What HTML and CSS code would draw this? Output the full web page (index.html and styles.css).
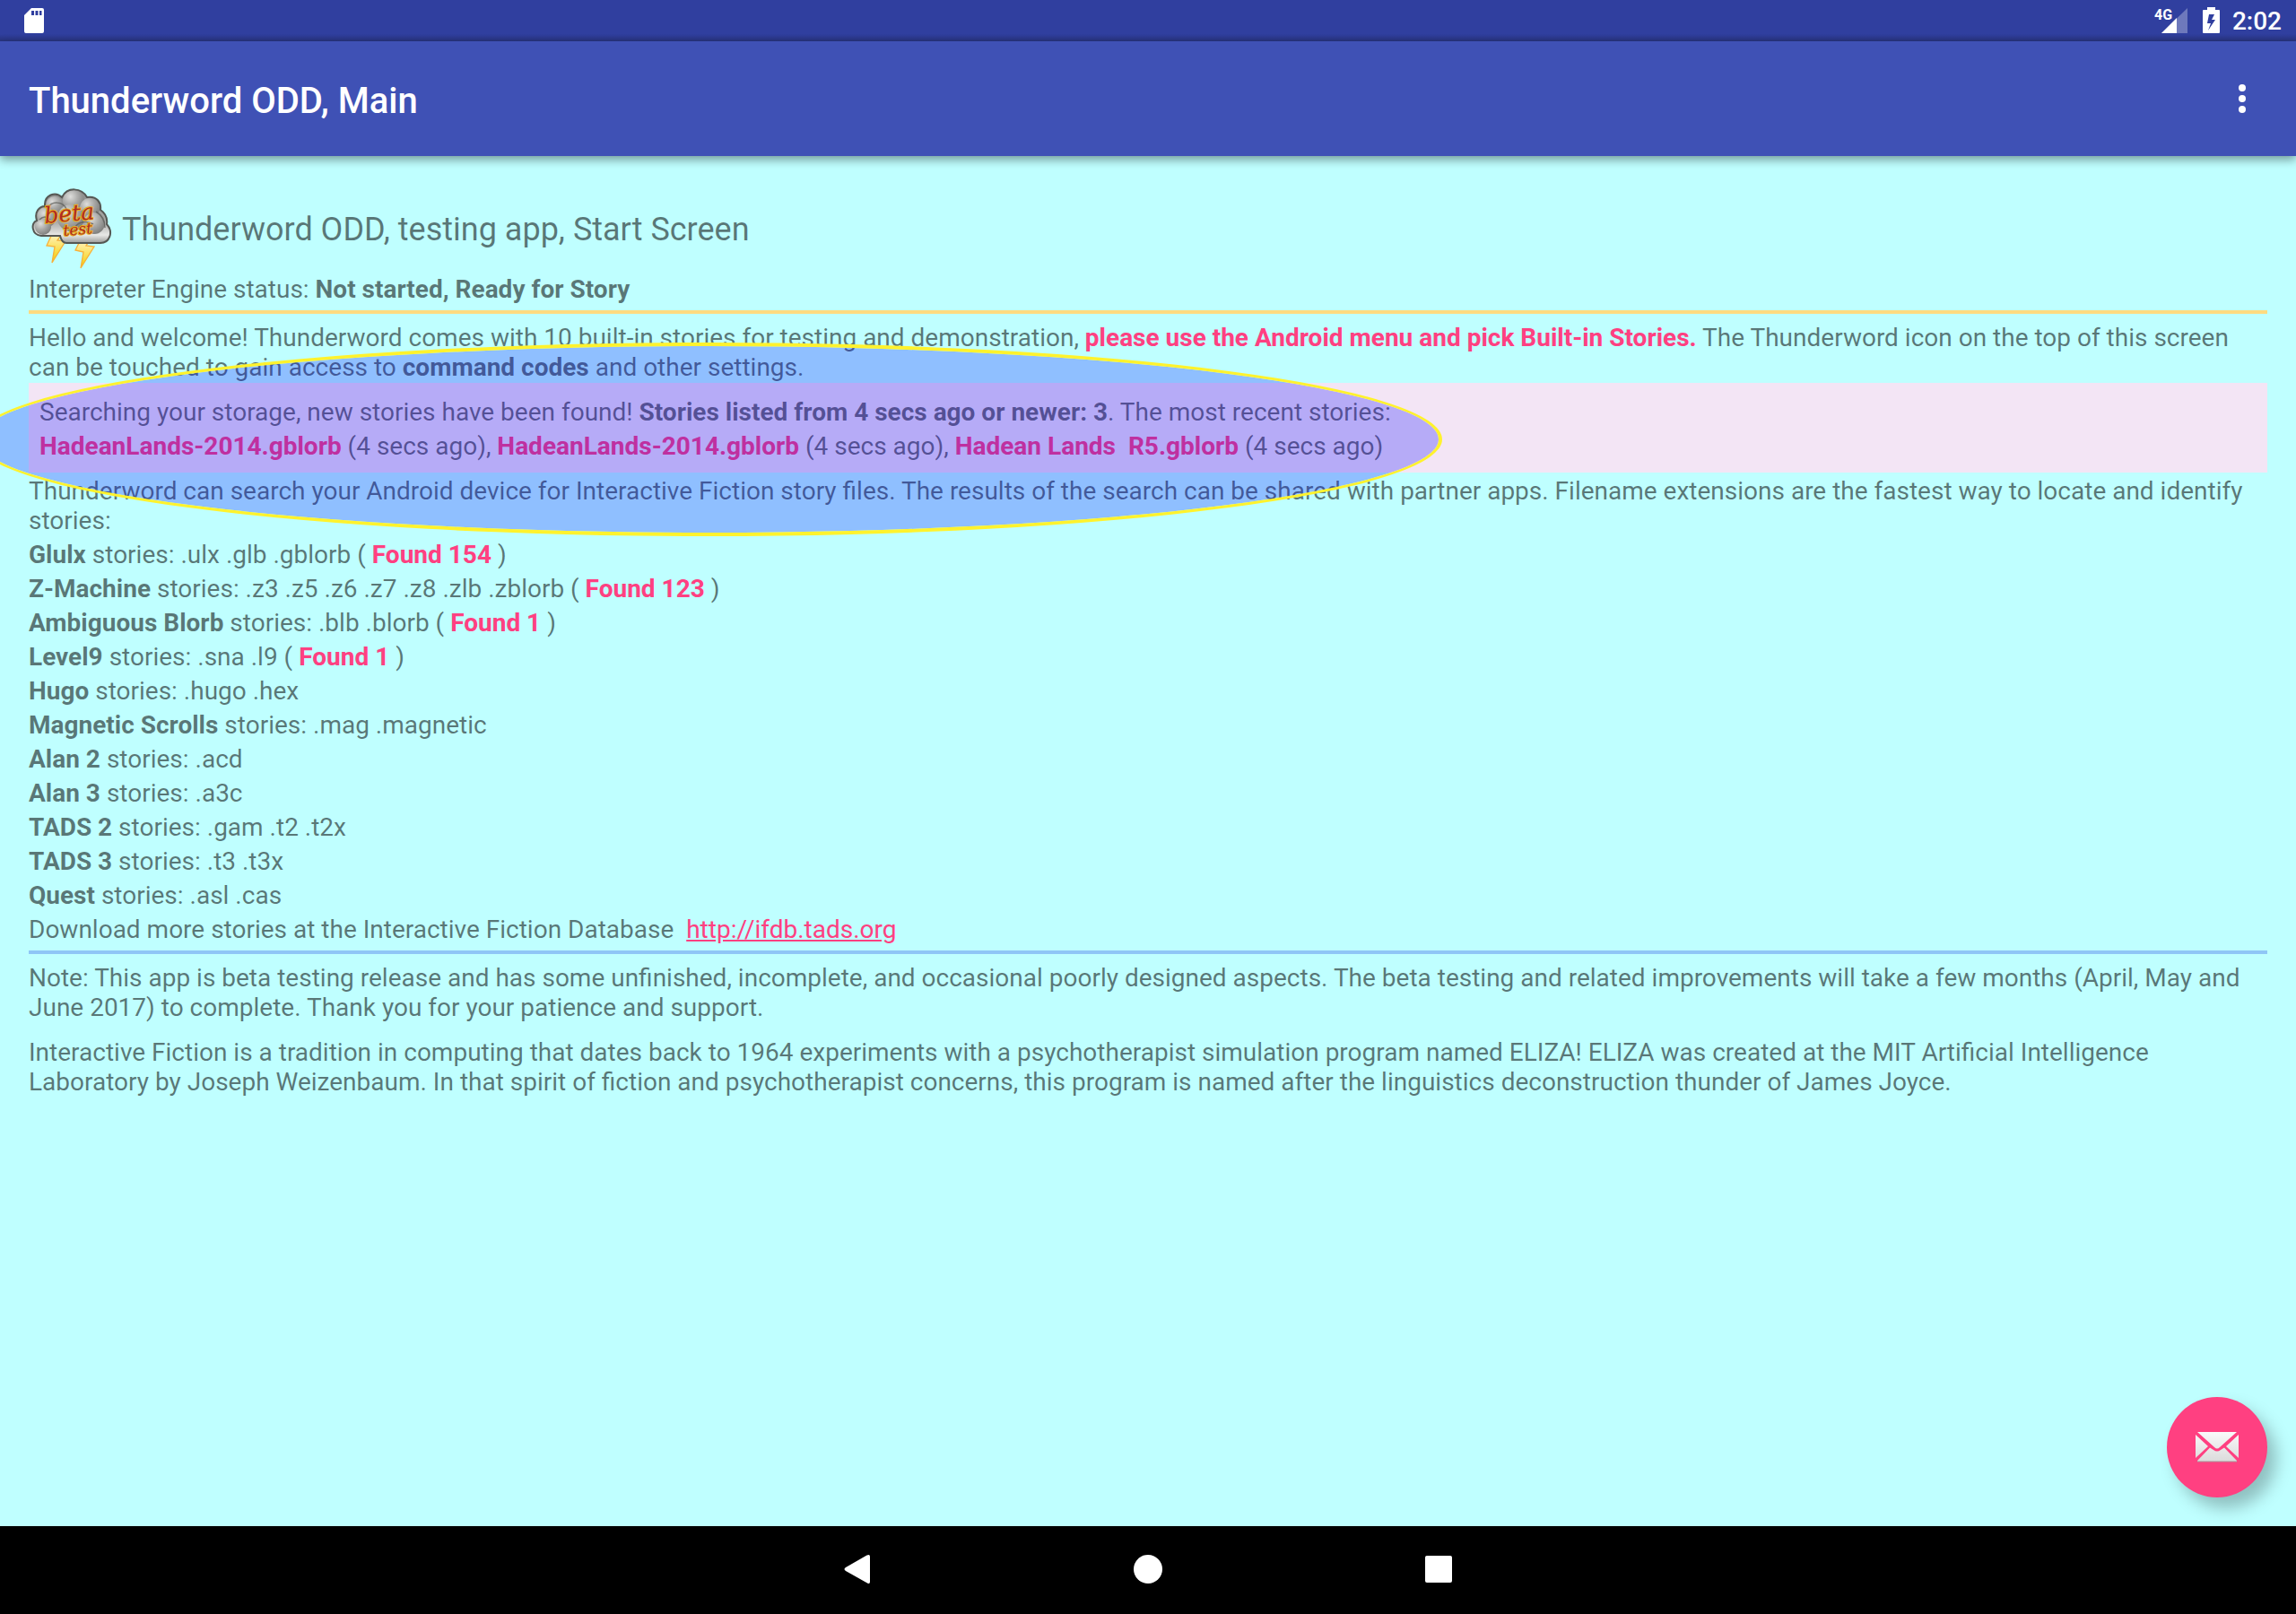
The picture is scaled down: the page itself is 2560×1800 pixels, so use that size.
FILE: index.html
```html
<!DOCTYPE html>
<html lang="en">
<head>
<meta charset="utf-8">
<title>Thunderword ODD, Main</title>
<link rel="stylesheet" href="styles.css">
</head>
<body>
<div class="status-bar">
  <svg class="sd" width="24" height="28" viewBox="0 0 24 28"><path fill="#fff" fill-rule="evenodd" d="M9 0h12a2 2 0 0 1 2 2v24a2 2 0 0 1-2 2H3a2 2 0 0 1-2-2V8zM9 3v5h3V3zm4.500 0v5h3V3zM18 3v5h2.500V3z"/></svg>
  <div class="status-icons">
    <svg class="signal" width="38" height="30" viewBox="0 0 38 30"><path d="M8 29 37 1v28z" fill="#fff" opacity=".3"/><path d="M8 29 25 12v17z" fill="#fff"/><text x="0" y="14" class="net">4G</text></svg>
    <svg width="20" height="30" viewBox="0 0 20 30"><path fill="#fff" fill-rule="evenodd" d="M5 0h9v3h4a1 1 0 0 1 1 1v24a1 1 0 0 1-1 1H1a1 1 0 0 1-1-1V4a1 1 0 0 1 1-1h4zM7 8 5 18h4L6 26l8-12H10l3-6z"/></svg>
    <span class="clock">2:02</span>
  </div>
</div>
<header class="app-bar">
  <h1>Thunderword ODD, Main</h1>
  <button class="overflow" aria-label="More options"><svg width="8" height="32" viewBox="0 0 8 32"><g fill="#fff"><circle cx="4" cy="4" r="4"/><circle cx="4" cy="16" r="4"/><circle cx="4" cy="28" r="4"/></g></svg></button>
</header>
<main>
  <div class="intro">
    <button class="logo" aria-label="Thunderword settings">
      <svg width="96" height="96" viewBox="0 0 96 96">
        <defs>
          <radialGradient id="puff" cx=".35" cy=".3" r=".8"><stop offset="0" stop-color="#dededc"/><stop offset=".5" stop-color="#a6a6a4"/><stop offset="1" stop-color="#777775"/></radialGradient>
          <linearGradient id="base" x1="0" y1="0" x2="0" y2="1"><stop offset="0" stop-color="#8b8b89"/><stop offset=".6" stop-color="#a8a8a6"/><stop offset=".85" stop-color="#e8e8e6"/><stop offset="1" stop-color="#999997"/></linearGradient>
          <linearGradient id="bolt" x1="0" y1="0" x2="0" y2="1"><stop offset="0" stop-color="#fff3c0"/><stop offset=".5" stop-color="#fbe05a"/><stop offset="1" stop-color="#f0cc00"/></linearGradient>
        </defs>
        <g fill="url(#bolt)" stroke="#f8b038" stroke-width="1.300"><path d="M26 55 20 68l9 1-3 18 15-24-9-1 5-7z"/><path d="M57 63 52 73l9 2-3 18 15-24-9-1 4-6z"/></g>
        <path d="M14 57C3 56 2 42 9 40 6 30 12 24 18 24 17 11 30 7 37 14 43 2 59 3 65 14 76 12 81 20 80 28 87 33 88 38 87 44 95 53 90 65 80 65H42q-5 0-7-8z" fill="url(#base)"/>
        <g fill="url(#puff)"><circle cx="29" cy="23" r="10"/><circle cx="50" cy="18" r="12"/><circle cx="68" cy="26" r="11"/><circle cx="47" cy="37" r="15"/><circle cx="20" cy="36" r="11"/><circle cx="73" cy="43" r="12"/><circle cx="16" cy="47" r="9"/></g>
        <path d="M22 26c3-8 16-8 20 1m10 20c4-6 13-7 20-3M12 39q6-6 12 0M75 30q10 6 10 18" fill="none" stroke="#555753" stroke-width="1.500" opacity=".7"/>
        <path d="M14 57C3 56 2 42 9 40 6 30 12 24 18 24 17 11 30 7 37 14 43 2 59 3 65 14 76 12 81 20 80 28 87 33 88 38 87 44 95 53 90 65 80 65H42q-5 0-7-8z" fill="none" stroke="#555753" stroke-width="2"/>
        <g class="badge"><text x="18" y="43" font-size="25" transform="rotate(-5 18 43)">beta</text><text x="39" y="57" font-size="17" transform="rotate(-5 39 57)">test</text></g>
      </svg>
    </button>
    <h2>Thunderword ODD, testing app, Start Screen</h2>
  </div>
  <p>Interpreter Engine status: <b>Not started, Ready for Story</b></p>
  <hr class="gold">
  <p>Hello and welcome! Thunderword comes with 10 built-in stories for testing and demonstration, <b class="hot">please use the Android menu and pick Built-in Stories.</b> The Thunderword icon on the top of this screen can be touched to gain access to <b>command codes</b> and other settings.</p>
  <div class="found">
    <p>Searching your storage, new stories have been found! <b>Stories listed from 4 secs ago or newer: 3</b>. The most recent stories:<br>
    <b class="hot">HadeanLands-2014.gblorb</b> (4 secs ago), <b class="hot">HadeanLands-2014.gblorb</b> (4 secs ago), <b class="hot">Hadean Lands&nbsp; R5.gblorb</b> (4 secs ago)</p>
    <div class="highlight"></div>
  </div>
  <p>Thunderword can search your Android device for Interactive Fiction story files. The results of the search can be shared with partner apps. Filename extensions are the fastest way to locate and identify stories:</p>
  <ul class="formats">
    <li><b>Glulx</b> stories: .ulx .glb .gblorb ( <b class="hot">Found 154</b> )</li>
    <li><b>Z-Machine</b> stories: .z3 .z5 .z6 .z7 .z8 .zlb .zblorb ( <b class="hot">Found 123</b> )</li>
    <li><b>Ambiguous Blorb</b> stories: .blb .blorb ( <b class="hot">Found 1</b> )</li>
    <li><b>Level9</b> stories: .sna .l9 ( <b class="hot">Found 1</b> )</li>
    <li><b>Hugo</b> stories: .hugo .hex</li>
    <li><b>Magnetic Scrolls</b> stories: .mag .magnetic</li>
    <li><b>Alan 2</b> stories: .acd</li>
    <li><b>Alan 3</b> stories: .a3c</li>
    <li><b>TADS 2</b> stories: .gam .t2 .t2x</li>
    <li><b>TADS 3</b> stories: .t3 .t3x</li>
    <li><b>Quest</b> stories: .asl .cas</li>
    <li>Download more stories at the Interactive Fiction Database&nbsp; <a class="hot" href="http://ifdb.tads.org">http://ifdb.tads.org</a></li>
  </ul>
  <hr class="blue">
  <p>Note: This app is beta testing release and has some unfinished, incomplete, and occasional poorly designed aspects. The beta testing and related improvements will take a few months (April, May and June 2017) to complete. Thank you for your patience and support.</p>
  <p class="history">Interactive Fiction is a tradition in computing that dates back to 1964 experiments with a psychotherapist simulation program named ELIZA! ELIZA was created at the MIT Artificial Intelligence Laboratory by Joseph Weizenbaum. In that spirit of fiction and psychotherapist concerns, this program is named after the linguistics deconstruction thunder of James Joyce.</p>
  <button class="fab" aria-label="Send mail">
    <svg width="48" height="34" viewBox="0 0 48 34"><defs><linearGradient id="mail" gradientUnits="userSpaceOnUse" x1="0" y1="0" x2="0" y2="34"><stop offset="0" stop-color="#fafafa"/><stop offset="1" stop-color="#dadada"/></linearGradient></defs><g fill="url(#mail)"><path d="M2 0h44L27 17q-3 3-6 0z"/><path d="M0 3 14 16 0 29z"/><path d="M48 3 34 16l14 13z"/><path d="M16 17.500 20 20q4 3 8 0l4-2.500L46 32v1H2v-1z"/></g><path d="M2 33h44" stroke="#a9929a" stroke-width="1"/></svg>
  </button>
</main>
<nav>
  <button aria-label="Back"><svg width="32" height="32" viewBox="0 0 32 32"><path fill="#fff" d="M26.500.6Q30 -1 30 2v28q0 3-3 1.400L3 18q-3-2 0-4z"/></svg></button>
  <button aria-label="Home"><svg width="32" height="32" viewBox="0 0 32 32"><circle cx="16" cy="16" r="16" fill="#fff"/></svg></button>
  <button aria-label="Recent apps"><svg width="32" height="32" viewBox="0 0 32 32"><rect x="1" y="1" width="30" height="30" rx="2" fill="#fff"/></svg></button>
</nav>
</body>
</html>
```
FILE: styles.css
```css
* { box-sizing: border-box; }
body {
  margin: 0;
  min-height: 100vh;
  display: flex;
  flex-direction: column;
  background: #bfffff;
  color: rgba(0, 0, 0, .54);
  font: 28px/33px Roboto, sans-serif;
}
h1, h2, p, ul { margin: 0; padding: 0; font-weight: 400; }
b { font-weight: 700; }
svg { display: block; }
button { border: 0; padding: 0; background: none; cursor: pointer; }

.status-bar {
  height: 46px;
  padding: 0 16px 0 26px;
  display: flex;
  align-items: center;
  justify-content: space-between;
  background: linear-gradient(#303f9f 38px, #28347f);
  color: #fff;
}
.status-icons { display: flex; align-items: center; gap: 16px; }
.clock { font-weight: 500; margin-left: -3px; }
.net { font: 700 16px Roboto, sans-serif; fill: #fff; }

.app-bar {
  height: 128px;
  padding: 0 56px 0 32px;
  display: flex;
  align-items: center;
  justify-content: space-between;
  background: #3f51b5;
  color: #fff;
  box-shadow: 0 4px 10px rgba(0, 0, 0, .4);
  z-index: 1;
}
.app-bar h1 { font-size: 40px; line-height: 48px; font-weight: 500; padding-top: 6px; }

main { flex: 1; position: relative; padding: 32px 32px 0; overflow: hidden; }
.intro { display: flex; align-items: center; gap: 8px; margin-bottom: 4px; }
.intro h2 { font-size: 36px; line-height: 42px; padding-top: 4px; }
.badge text { font-family: "DejaVu Serif", serif; font-weight: 400; font-style: italic; fill: #b02a24; stroke: #e8b020; stroke-width: 2px; paint-order: stroke; }

hr { height: 4px; margin: 7px 0 10px; border: 0; }
.gold { background: #ffdb80; }
.blue { background: #8fc6f6; margin-top: 4px; }
.hot { color: #ff4081; }

.found { position: relative; margin: 1px 0 4px; padding: 14px 12px 10px; background: #f3e5f5; line-height: 38px; }
.highlight {
  position: absolute;
  left: -60px;
  top: -45px;
  width: 1636px;
  height: 216px;
  border: 4px solid #fff22d;
  border-radius: 50%;
  background: rgba(0, 0, 255, .25);
  background-clip: padding-box;
  pointer-events: none;
}
.formats { list-style: none; line-height: 38px; padding-top: 3px; }
.history { margin-top: 17px; }

.fab {
  position: absolute;
  right: 32px;
  bottom: 32px;
  width: 112px;
  height: 112px;
  border-radius: 50%;
  background: #ff4081;
  display: grid;
  place-items: center;
  box-shadow: 10px 12px 18px rgba(0, 0, 0, .25);
}

nav { height: 98px; padding-bottom: 2px; display: flex; justify-content: center; align-items: center; gap: 292px; background: #000; }
```
